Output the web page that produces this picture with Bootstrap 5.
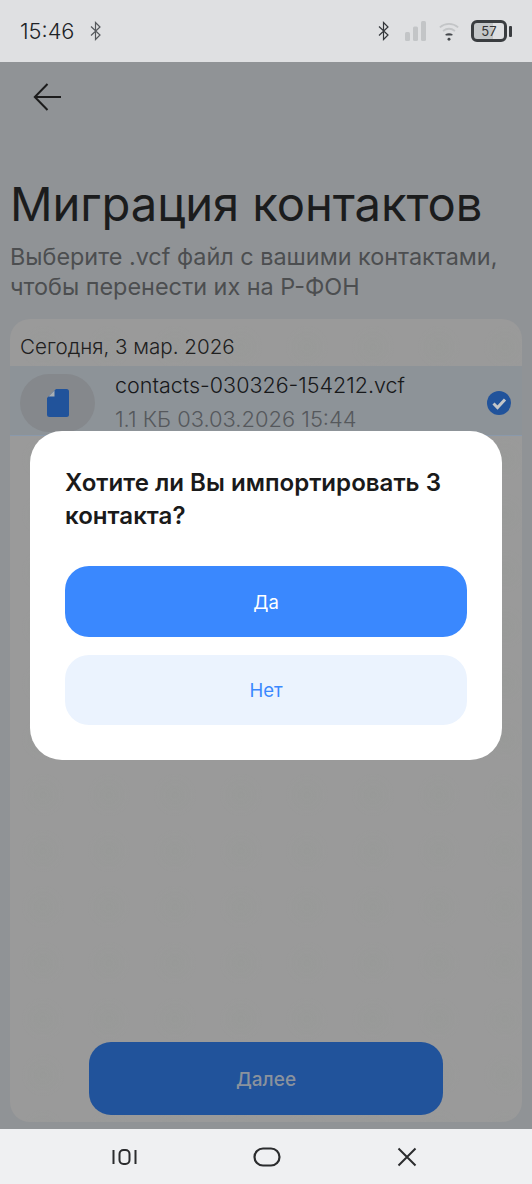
<!DOCTYPE html>
<html lang="ru">
<head>
  <meta charset="UTF-8">
  <meta name="viewport" content="width=device-width, initial-scale=1">
  <title>Миграция контактов</title>
  <link href="https://cdn.jsdelivr.net/npm/bootstrap@5.3.3/dist/css/bootstrap.min.css" rel="stylesheet">
  <style>
    html, body { height: 1184px; overflow: hidden; }
    body { font-family: Inter, "Noto Sans", sans-serif; background: #909396; color: #1c1c1c; }
    .phone { height: 1184px; position: relative; }
    .status-bar { height: 62px; background: #dfe0e2; padding: 0 20px; flex: none; }
    .status-time { font-size: 21.8px; font-weight: 300; color: #202327; }
    .sb-gap-a { margin-left: 15px; }
    .sb-gap-b { margin-left: 12px; }
    .sb-gap-c { margin-left: 11px; }
    .batt { width: 36px; height: 22px; border: 3px solid #3a3d40; border-radius: 6px; font-size: 13px; line-height: 16px; text-align: center; color: #333; background: linear-gradient(90deg, #c4c7c9 65%, #dfe0e2 65%); }
    .batt-tip { width: 3px; height: 11px; background: #3a3d40; border-radius: 1px; margin-left: 2px; }
    .screen { background: #909396; min-height: 0; padding: 0 10px 7px; }
    .back-wrap { height: 70px; padding-left: 23px; }
    .page-title { font-size: 47.2px; font-weight: 400; line-height: 56px; margin: 44px 0 0; color: #1b1c1d; letter-spacing: -.1px; white-space: nowrap; }
    .page-sub { font-size: 23.4px; line-height: 30px; color: #4c4e50; margin: 10px -4px 17px 0; white-space: nowrap; }
    .file-panel { background-color: #9a9a9a; background-image: radial-gradient(circle, rgba(130,150,130,.07) 0, rgba(130,150,130,0) 22px); background-size: 66px 56px; border-radius: 20px; min-height: 0; position: relative; }
    .day-label { font-size: 20.6px; font-weight: 300; line-height: 28px; padding: 14px 10px 5px; color: #202020; }
    .file-row { height: 70px; background: #8d9398; border-bottom: 1px solid #8a99ab; padding: 4px 11px 0 10px; }
    .file-ico { width: 75px; height: 58px; border-radius: 29px; background: #85888c; flex: none; margin-right: 20px; }
    .file-name { font-size: 21.5px; font-weight: 300; line-height: 28px; color: #17181a; margin-top: 1px; }
    .file-meta { font-size: 21.9px; font-weight: 300; line-height: 28px; color: #55585c; margin-top: 6px; white-space: nowrap; }
    .next-wrap { padding: 0 79px 7px; }
    .next-btn { height: 73px; border-radius: 22px; background: #21539b; border: 0; color: #8a929d; font-size: 19px; font-weight: 500; padding-top: 10px; }
    .nav-bottom { height: 55px; background: #eff0f2; padding: 0 115px 0 112px; flex: none; }
    .dialog { position: absolute; left: 30px; top: 431px; width: 472px; height: 329px; background: #fff; border-radius: 32px; padding: 35px; }
    .dialog-title { font-size: 24.1px; line-height: 33px; font-weight: 600; color: #1a1a1a; margin: 0 0 34px; }
    .dlg-btn { border-radius: 24px; border: 0; font-size: 18.5px; font-weight: 400; width: 100%; display: block; padding-top: 8px; }
    .dlg-yes { height: 71px; background: #3a88fe; color: #fff; margin-bottom: 18px; }
    .dlg-no { height: 70px; background: #ebf3fe; color: #3a88fe; }
  </style>
</head>
<body>
  <div class="phone d-flex flex-column">
    <!-- status bar -->
    <div class="status-bar d-flex align-items-center justify-content-between">
      <div class="d-flex align-items-center">
        <span class="status-time">15:46</span>
        <svg class="ms-3" width="12" height="20" viewBox="0 0 12 20" fill="none" stroke="#55585c" stroke-width="1.2"><path d="M1 5.5 10 14l-4.5 4.5v-17L10 6 1 14.5"/></svg>
      </div>
      <div class="d-flex align-items-center">
        <svg width="12" height="20" viewBox="0 0 12 20" fill="none" stroke="#33363a" stroke-width="1.2"><path d="M1 5.5 10 14l-4.5 4.5v-17L10 6 1 14.5"/></svg>
        <svg class="sb-gap-a" width="21" height="20" viewBox="0 0 21 20" fill="#c3c5c7"><rect x="0" y="11" width="5" height="9" rx="1.5"/><rect x="8" y="5.5" width="5" height="14.5" rx="1.5"/><rect x="16" y="0" width="5" height="20" rx="1.5"/></svg>
        <svg class="sb-gap-b" width="22" height="22" viewBox="0 0 24 22" fill="none"><path d="M2 7c6-5 14-5 20 0" stroke="#c3c5c7" stroke-width="2"/><path d="M5.5 11c4-3 9-3 13 0" stroke="#c3c5c7" stroke-width="2"/><path d="M8 14.5c2.5-1.500 5.500-1.500 8 0l-.5 1.500h-7z" fill="#45484c"/><circle cx="12" cy="20" r="1.6" fill="#45484c"/></svg>
        <div class="batt sb-gap-c">57</div>
        <div class="batt-tip"></div>
      </div>
    </div>

    <!-- screen -->
    <div class="screen flex-grow-1 d-flex flex-column">
      <div class="back-wrap d-flex align-items-center">
        <svg width="30" height="30" viewBox="0 0 30 30" fill="none" stroke="#1c1c1c" stroke-width="2"><path d="M28 15H2M14.5 2 1.8 15l12.700 13"/></svg>
      </div>
      <h1 class="page-title">Миграция контактов</h1>
      <p class="page-sub">Выберите .vcf файл с вашими контактами,<br>чтобы перенести их на Р-ФОН</p>

      <div class="file-panel flex-grow-1 d-flex flex-column">
        <div class="day-label">Сегодня, 3 мар. 2026</div>
        <div class="file-row d-flex align-items-center">
          <div class="file-ico d-flex align-items-center justify-content-center">
            <svg width="22" height="28" viewBox="0 0 22 28"><path d="M9 0h10.5A2.5 2.5 0 0 1 22 2.5v23a2.500 2.500 0 0 1-2.500 2.500h-17A2.500 2.500 0 0 1 0 25.500V9z" fill="#21539b"/><path d="M7.500 1.500v6h-6z" fill="#a8aeb4"/></svg>
          </div>
          <div class="flex-grow-1 align-self-start">
            <div class="file-name">contacts-030326-154212.vcf</div>
            <div class="file-meta">1.1 КБ 03.03.2026 15:44</div>
          </div>
          <svg width="24" height="24" viewBox="0 0 24 24"><circle cx="12" cy="12" r="12" fill="#21539b"/><path d="M6.500 12.500 10.500 16.500 18 8.500" fill="none" stroke="#c4c6c8" stroke-width="3"/></svg>
        </div>
        <div class="flex-grow-1"></div>
        <div class="next-wrap">
          <button class="btn next-btn w-100" type="button">Далее</button>
        </div>
      </div>
    </div>

    <!-- android nav -->
    <div class="nav-bottom d-flex align-items-center justify-content-between">
      <svg width="25" height="20" viewBox="0 0 25 20" fill="none" stroke="#2b2c2e" stroke-width="2"><path d="M1.500 3v14M23.500 3v14"/><rect x="7.500" y="3" width="10" height="14" rx="4"/></svg>
      <svg width="28" height="20" viewBox="0 0 28 20" fill="none" stroke="#2b2c2e" stroke-width="2.2"><rect x="1.500" y="1.500" width="25" height="17" rx="8.500"/></svg>
      <svg width="20" height="20" viewBox="0 0 20 20" fill="none" stroke="#2b2c2e" stroke-width="2"><path d="M1.500 1.500 18.500 18.500M18.500 1.500 1.500 18.500"/></svg>
    </div>

    <!-- dialog over the dimmed screen -->
    <div class="dialog">
      <h2 class="dialog-title">Хотите ли Вы импортировать 3 контакта?</h2>
      <button class="btn dlg-btn dlg-yes" type="button">Да</button>
      <button class="btn dlg-btn dlg-no" type="button">Нет</button>
    </div>
  </div>
  <script src="https://cdn.jsdelivr.net/npm/bootstrap@5.3.3/dist/js/bootstrap.bundle.min.js"></script>
</body>
</html>
